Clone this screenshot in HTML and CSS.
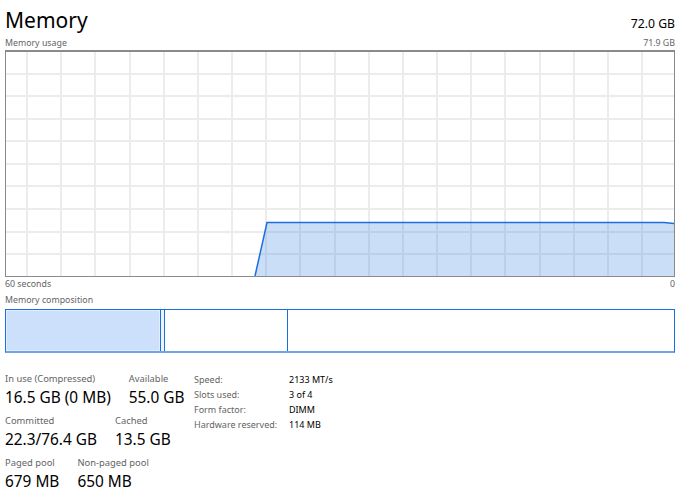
FILE: index.html
```html
<!DOCTYPE html>
<html lang="en">

<head>
    <meta charset="UTF-8">
    <title>Memory</title>
    <link rel="stylesheet" href="styles.css">
</head>

<body>
    <div class="head">
        <h1 class="title">Memory</h1>
        <span class="total">72.0 GB</span>
    </div>
    <div class="caption">
        <span>Memory usage</span>
        <span>71.9 GB</span>
    </div>

    <div class="graph">
        <svg width="668" height="224" viewBox="0 0 668 224">
            <g class="grid">
                <line x1="21" y1="0" x2="21" y2="224" />
                <line x1="55" y1="0" x2="55" y2="224" />
                <line x1="89" y1="0" x2="89" y2="224" />
                <line x1="124" y1="0" x2="124" y2="224" />
                <line x1="158" y1="0" x2="158" y2="224" />
                <line x1="192" y1="0" x2="192" y2="224" />
                <line x1="226" y1="0" x2="226" y2="224" />
                <line x1="260" y1="0" x2="260" y2="224" />
                <line x1="294" y1="0" x2="294" y2="224" />
                <line x1="329" y1="0" x2="329" y2="224" />
                <line x1="363" y1="0" x2="363" y2="224" />
                <line x1="397" y1="0" x2="397" y2="224" />
                <line x1="431" y1="0" x2="431" y2="224" />
                <line x1="465" y1="0" x2="465" y2="224" />
                <line x1="499" y1="0" x2="499" y2="224" />
                <line x1="534" y1="0" x2="534" y2="224" />
                <line x1="568" y1="0" x2="568" y2="224" />
                <line x1="602" y1="0" x2="602" y2="224" />
                <line x1="636" y1="0" x2="636" y2="224" />
                <line x1="0" y1="22" x2="668" y2="22" />
                <line x1="0" y1="44" x2="668" y2="44" />
                <line x1="0" y1="67" x2="668" y2="67" />
                <line x1="0" y1="89" x2="668" y2="89" />
                <line x1="0" y1="112" x2="668" y2="112" />
                <line x1="0" y1="134" x2="668" y2="134" />
                <line x1="0" y1="157" x2="668" y2="157" />
                <line x1="0" y1="180" x2="668" y2="180" />
                <line x1="0" y1="202" x2="668" y2="202" />
            </g>
            <!-- usage over the last 60 seconds -->
            <polygon class="area" points="249,224 261,170.5 658,170.5 668,171.5 668,224" />
            <polyline class="usage" points="249,224 261,170.5 658,170.5 668,171.5" />
        </svg>
    </div>
    <div class="caption">
        <span>60 seconds</span>
        <span>0</span>
    </div>

    <div class="caption caption-gap">
        <span>Memory composition</span>
    </div>
    <div class="comp">
        <div class="seg seg-inuse"></div>
        <div class="seg seg-modified"></div>
        <div class="seg seg-standby"></div>
        <div class="seg seg-free"></div>
    </div>

    <div class="stats">
        <div class="stat-rows">
            <div class="stat-row">
                <div class="stat">
                    <div class="stat-label">In use (Compressed)</div>
                    <div class="stat-value">16.5 GB (0 MB)</div>
                </div>
                <div class="stat">
                    <div class="stat-label">Available</div>
                    <div class="stat-value">55.0 GB</div>
                </div>
            </div>
            <div class="stat-row">
                <div class="stat">
                    <div class="stat-label">Committed</div>
                    <div class="stat-value">22.3/76.4 GB</div>
                </div>
                <div class="stat">
                    <div class="stat-label">Cached</div>
                    <div class="stat-value">13.5 GB</div>
                </div>
            </div>
            <div class="stat-row">
                <div class="stat">
                    <div class="stat-label">Paged pool</div>
                    <div class="stat-value">679 MB</div>
                </div>
                <div class="stat">
                    <div class="stat-label">Non-paged pool</div>
                    <div class="stat-value">650 MB</div>
                </div>
            </div>
        </div>

        <table class="hw">
            <tr><td class="hw-label">Speed:</td><td>2133 MT/s</td></tr>
            <tr><td class="hw-label">Slots used:</td><td>3 of 4</td></tr>
            <tr><td class="hw-label">Form factor:</td><td>DIMM</td></tr>
            <tr><td class="hw-label">Hardware reserved:</td><td>114 MB</td></tr>
        </table>
    </div>
</body>

</html>
```

FILE: styles.css
```css
body {
    margin: 0;
    padding: 0 4px 0 5px;
    background: #ffffff;
    color: #000000;
    font-family: 'Noto Sans', 'Open Sans', sans-serif;
}

.head {
    display: flex;
    justify-content: space-between;
    align-items: baseline;
    height: 36px;
}

.title {
    margin: 0;
    padding-top: 4px;
    font-size: 21px;
    font-weight: 400;
    line-height: 32px;
}

.total {
    font-size: 12.2px;
}

.caption {
    display: flex;
    justify-content: space-between;
    font-size: 8.8px;
    line-height: 14px;
    color: #646464;
}

.caption-gap {
    margin-top: 2px;
}

/* graph */
.graph {
    height: 224px;
    border: 1px solid #8a8a8a;
    border-top-width: 2px;
}

.graph svg {
    display: block;
}

.grid line {
    stroke: #ececec;
    stroke-width: 2;
}

.area {
    fill: #1a6fe0;
    fill-opacity: 0.23;
}

.usage {
    fill: none;
    stroke: #1a6fe0;
    stroke-width: 1.5;
}

/* memory composition bar */
.comp {
    display: flex;
    height: 41px;
    margin-top: 2px;
    border: 1px solid #1a6fe0;
    border-bottom: 2px solid #6fa3ea;
}

.seg {
    border-right: 1px solid #1a6fe0;
}

.seg-inuse {
    width: 154px;
    background: #cce0fb;
    box-shadow: inset 0 0 0 1px #e3eefd;
}

.seg-modified {
    width: 3px;
    background: #eef4fd;
}

.seg-standby {
    width: 122px;
}

.seg-free {
    flex: 1;
    border-right: none;
}

/* numbers under the bar */
.stats {
    display: flex;
    align-items: flex-start;
    margin-top: 18px;
    white-space: nowrap;
}

.stat-rows {
    flex: 0 0 189px;
}

.stat-row {
    display: flex;
    gap: 18px;
    margin-bottom: 4px;
}

.stat-label {
    font-size: 9.4px;
    line-height: 16px;
    color: #646464;
}

.stat-value {
    font-size: 15.4px;
    line-height: 22px;
}

.hw {
    border-collapse: collapse;
    font-size: 9px;
    line-height: 15px;
    margin-top: 0.5px;
}

.hw td {
    padding: 0;
    vertical-align: top;
}

.hw-label {
    width: 95px;
    color: #646464;
}
```
